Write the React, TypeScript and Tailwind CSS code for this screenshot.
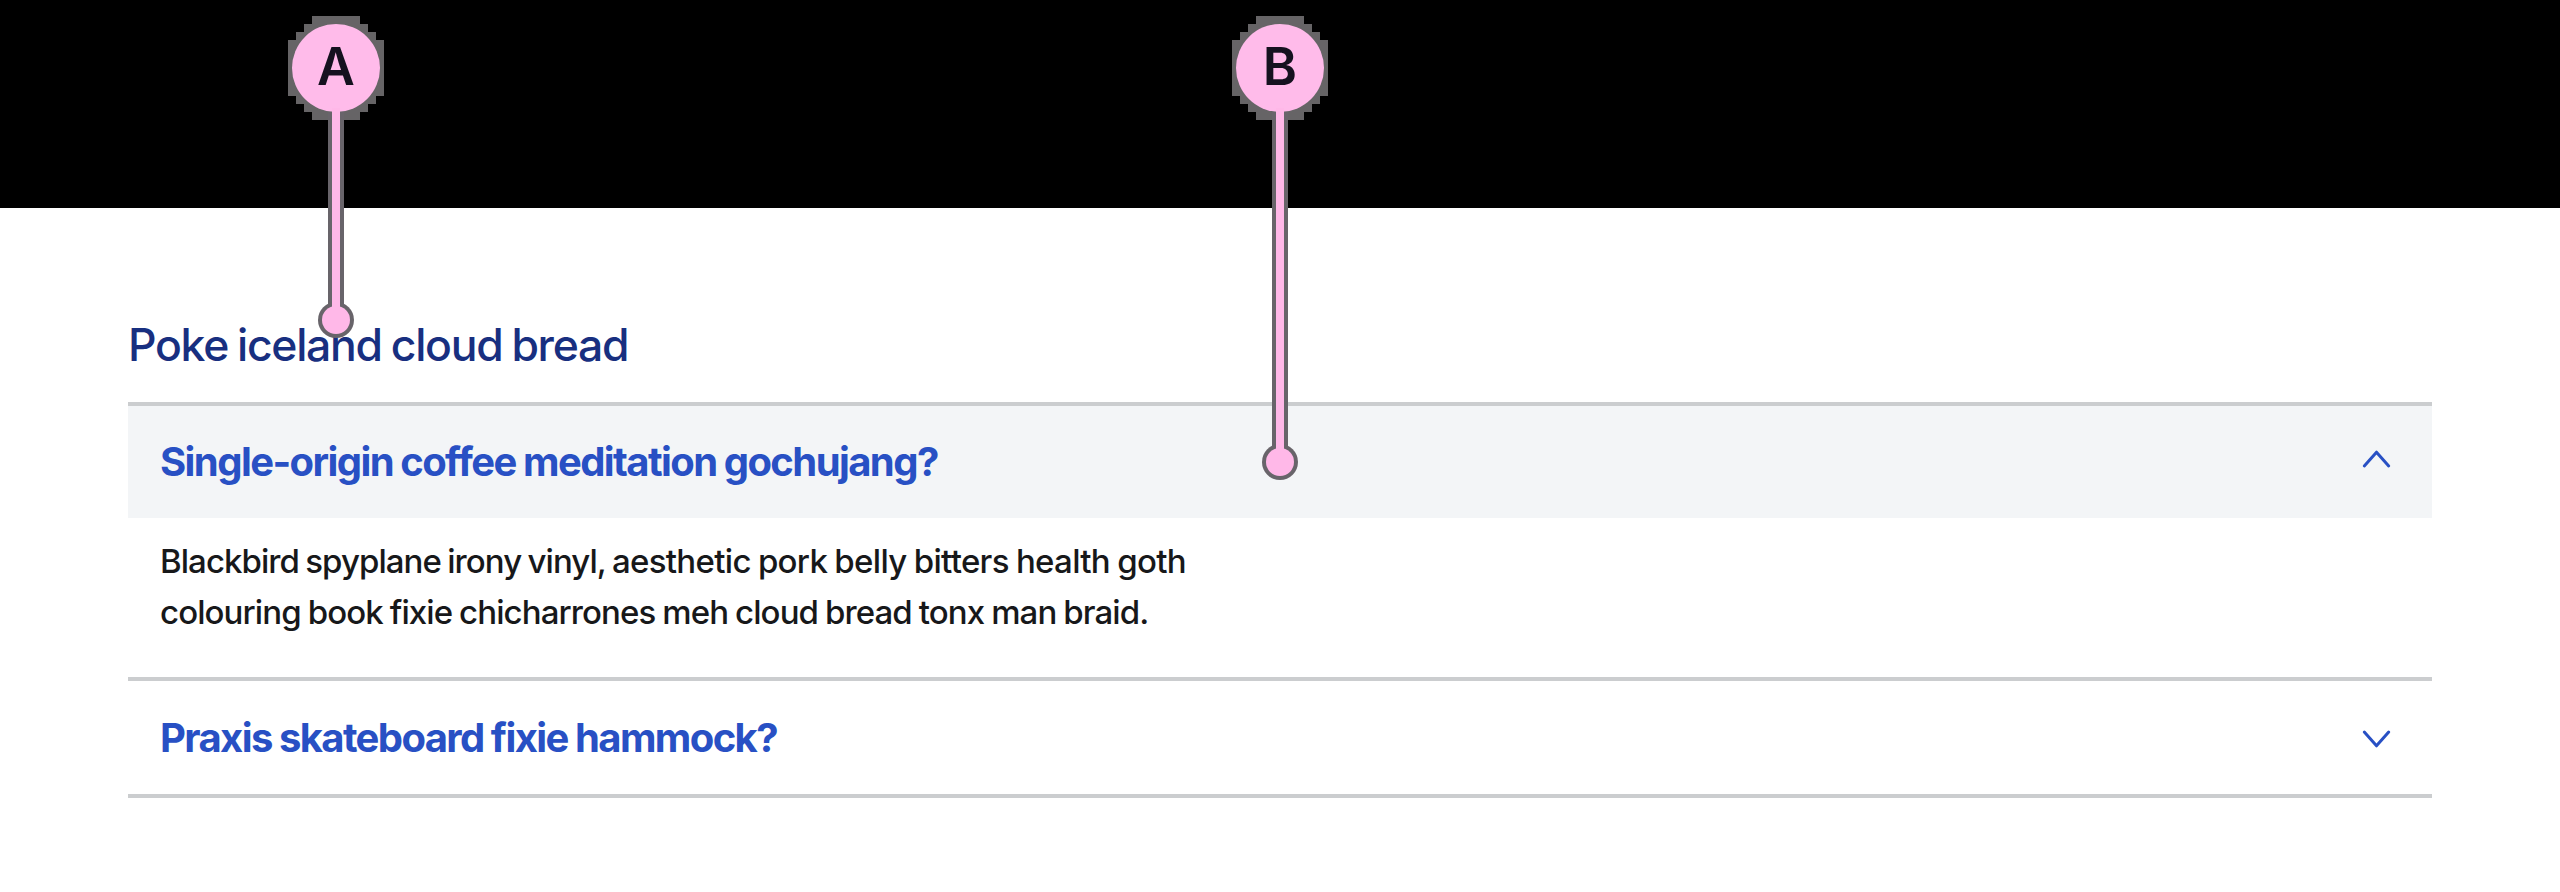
type Marker = { label: string; left: string; end: number };

const markers: Marker[] = [
  { label: "A", left: "left-[284px]", end: 320 },
  { label: "B", left: "left-[1228px]", end: 462 },
];

function Pin({ label, left, end }: Marker) {
  return (
    <div className={`absolute top-0 h-[500px] w-[104px] ${left}`}>
      <svg className="absolute inset-0" width="104" height="500" viewBox="0 0 104 500">
        <path
          d="M28 16h48v8h8v8h8v8h8v56h-8v8h-8v8h-8v8h-48v-8h-8v-8h-8v-8h-8v-56h8v-8h8v-8h8z"
          fill="#666466"
          shapeRendering="crispEdges"
        />
        <rect x="44" y="112" width="16" height={end - 112} fill="#68646a" />
        <circle cx="52" cy={end} r="18" fill="#68646a" />
        <circle cx="52" cy="68" r="44" fill="#ffbbea" />
        <rect x="48" y="108" width="8" height={end - 108} fill="#ffb8e8" />
        <circle cx="52" cy={end} r="14" fill="#ffb8e8" />
      </svg>
      <span className="absolute left-0 top-[37px] w-[104px] text-center text-[52px] font-semibold leading-[60px] text-[#15111f]">
        {label}
      </span>
    </div>
  );
}

function Chevron({ up = false }: { up?: boolean }) {
  return (
    <svg
      className={up ? "mb-[6px] mr-[39px] shrink-0" : "mr-[39px] shrink-0"}
      width="33"
      height="24"
      viewBox="0 0 33 24"
      fill="none"
      stroke="#2850c4"
      strokeWidth="3"
      strokeLinecap="round"
      strokeLinejoin="round"
    >
      <path d={up ? "M4.3 19L16.5 5.2L28.7 19" : "M4.3 6L16.5 19.8L28.7 6"} />
    </svg>
  );
}

export default function App() {
  return (
    <div className="relative h-[892px] w-[2560px] overflow-hidden bg-white font-['Inter',sans-serif]">
      <header className="h-[208px] bg-black" />
      <main className="px-32 pt-[110px]">
        <h2 className="h-[84px] whitespace-nowrap text-[44.5px] font-medium leading-[54px] text-[#182f80]">
          <span className="tracking-[-1.3px] [word-spacing:-1.5px]">Poke iceland cloud bread</span>
        </h2>
        <section className="border-y-4 border-[#cbcdcf]">
          <button className="flex h-28 w-full items-center justify-between bg-[#f3f5f7] pl-8 text-left">
            <span className="whitespace-nowrap text-[40px] font-bold leading-[48px] tracking-[-1.58px] text-[#2850c4] [word-spacing:-0.7px]">
              Single-origin coffee meditation gochujang?
            </span>
            <Chevron up />
          </button>
          <div className="h-[159px] whitespace-nowrap pl-8 pt-[18px] text-[33px] font-medium leading-[51px] text-[#17181a]">
            <p>
              <span className="tracking-[-0.95px] [word-spacing:-1.5px]">Blackbird spyplane irony vinyl, </span>
              <span className="tracking-[-0.68px] [word-spacing:-1px]">aesthetic pork belly bitters health goth</span>
            </p>
            <p className="tracking-[-0.9px] [word-spacing:-1px]">colouring book fixie chicharrones meh cloud bread tonx man braid.</p>
          </div>
          <button className="flex h-[117px] w-full items-center justify-between border-t-4 border-[#cbcdcf] pl-8 text-left">
            <span className="whitespace-nowrap text-[40px] font-bold leading-[48px] tracking-[-1.6px] text-[#2850c4] [word-spacing:-0.7px]">
              Praxis skateboard fixie hammock?
            </span>
            <Chevron />
          </button>
        </section>
      </main>
      {markers.map((marker) => (
        <Pin key={marker.label} {...marker} />
      ))}
    </div>
  );
}
